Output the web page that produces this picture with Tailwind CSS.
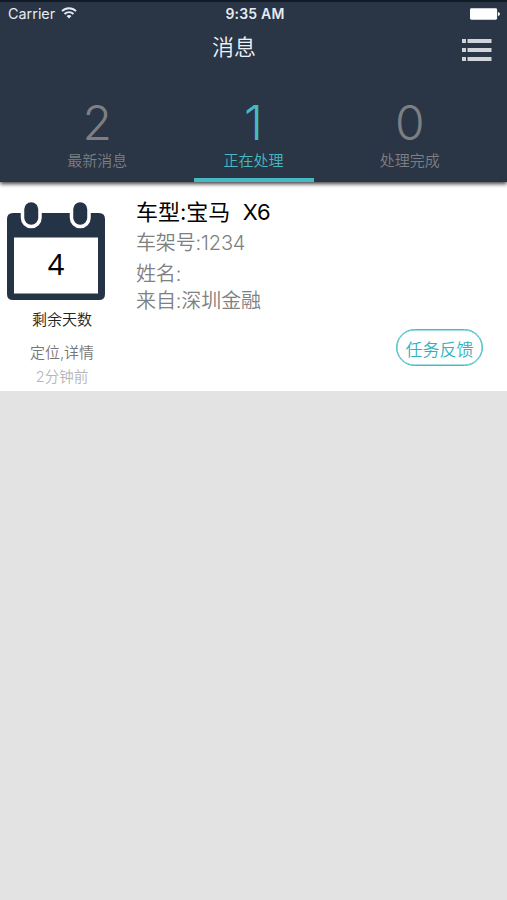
<!DOCTYPE html>
<html lang="zh-CN">
<head>
<meta charset="utf-8">
<title>消息</title>
<script src="https://cdn.jsdelivr.net/npm/@tailwindcss/browser@4"></script>
</head>
<body class="h-[900px] w-[507px] overflow-hidden bg-[#e3e3e3] font-['Inter','Noto_Sans_CJK_SC',sans-serif] whitespace-nowrap">
  <header class="relative z-10 flex h-[182px] flex-col border-t-2 border-[#111b28] bg-[#2a3545] shadow-[0_2px_4px_rgba(0,0,0,0.75)]">
    <div class="grid h-[24px] grid-cols-[1fr_auto_1fr] items-center pr-[7px] pl-[8px] text-[#e6ebf2]">
      <div class="flex items-center gap-[6px]">
        <span class="text-[14.4px] leading-[24px]">Carrier</span>
        <svg class="-mt-[2px] h-[12px] w-[16px]" viewBox="0 0 16 12" fill="none" stroke="currentColor" stroke-width="1.9"><path d="M1 4.2C5 .2 11 .2 15 4.2M3.500 7C6 4.500 10 4.500 12.500 7"/><path d="M8 11.500 5.500 9Q8 7 10.500 9Z" fill="currentColor" stroke="none"/></svg>
      </div>
      <span class="pl-[2px] text-[14px] leading-[24px] font-semibold tracking-[0.2px]">9:35 AM</span>
      <svg class="h-[12px] w-[30px] justify-self-end" viewBox="0 0 31 12" fill="#fff"><rect width="28" height="12" rx="1.5"/><path d="M28.8 4Q31 4.5 31 6T28.8 8Z"/></svg>
    </div>
    <div class="grid h-[43px] grid-cols-[1fr_auto_1fr] items-center pr-[15px]">
      <h1 class="col-start-2 -ml-[24px] text-[22px] leading-[43px] font-[350] text-[#eef2f7]">消息</h1>
      <svg class="mt-[5px] h-[24px] w-[31px] justify-self-end" viewBox="0 0 31 24" fill="#d2d4dc"><path d="M1 1h4v4H1zM6.500 1H30.500v4H6.500zM1 10h4v4H1zM6.500 10H30.500v4H6.500zM1 19h4v4H1zM6.500 19H30.500v4H6.500z"/></svg>
    </div>
    <nav class="grid flex-1 grid-cols-3 px-[19px] text-center text-[#7d7f82]">
      <div class="flex flex-col items-center pt-[28px]">
        <span class="text-[48px] leading-[52px] font-[350]">2</span>
        <span class="mt-px text-[15px] leading-[22px] font-[350]">最新消息</span>
      </div>
      <div class="flex flex-col items-center pt-[28px] text-[#45b9c4]">
        <span class="text-[48px] leading-[52px] font-[350]">1</span>
        <span class="mt-px text-[15px] leading-[22px] font-[350]">正在处理</span>
        <span class="mt-auto ml-[1px] h-[4px] w-[120px] bg-[#45b9c4]"></span>
      </div>
      <div class="flex flex-col items-center pt-[28px]">
        <span class="text-[48px] leading-[52px] font-[350]">0</span>
        <span class="mt-px text-[15px] leading-[22px] font-[350]">处理完成</span>
      </div>
    </nav>
  </header>
  <main class="flex h-[209px] bg-white">
    <section class="flex w-[124px] flex-col items-center pt-[19px]">
      <div class="ml-[6px] grid h-[101px] w-[100px] self-start">
        <svg class="col-start-1 row-start-1 h-[101px] w-[100px]" viewBox="0 0 100 101">
          <path fill="#253347" fill-rule="evenodd" d="M7 12H93Q99 12 99 18V93Q99 99 93 99H7Q1 99 1 93V18Q1 12 7 12ZM8 36.500V92.500H92V36.500Z"/>
          <g fill="#253347" stroke="#fff" stroke-width="3.500"><rect x="16.500" y="-.5" width="17.500" height="26" rx="8.700"/><rect x="65.500" y="-.5" width="17.500" height="26" rx="8.700"/></g>
        </svg>
        <span class="col-start-1 row-start-1 pt-[48px] text-center font-['Noto_Sans'] text-[29px] leading-[30px] text-black">4</span>
      </div>
      <span class="mt-[7px] text-[15px] leading-[22px] font-[350] text-[#222]">剩余天数</span>
      <span class="mt-[11px] text-[15px] leading-[22px] font-[350] text-[#777]">定位,详情</span>
      <span class="mt-[2px] text-[14.500px] leading-[22px] font-[350] text-[#b5b5b5]">2分钟前</span>
    </section>
    <section class="flex flex-1 flex-col pt-[14px] pl-[12px] text-[20px] font-[350] text-[#808080]">
      <h2 class="text-[22px] leading-[32px] font-normal whitespace-pre text-black">车型:宝马  X6</h2>
      <p class="leading-[31px] tracking-[-0.15px]">车架号:1234</p>
      <p class="leading-[30px] tracking-[-0.15px]">姓名:</p>
      <p class="leading-[25px] tracking-[-0.1px]">来自:深圳金融</p>
      <button class="mt-[15px] mr-[24px] flex h-[37px] w-[87px] items-center justify-center self-end rounded-full border-[1.5px] border-[#45bdc6] pt-[5px] text-[17px] leading-[28px] font-[350] text-[#30b2be] shadow-[inset_0_0_0_0.5px_#45bdc6]">任务反馈</button>
    </section>
  </main>
</body>
</html>
